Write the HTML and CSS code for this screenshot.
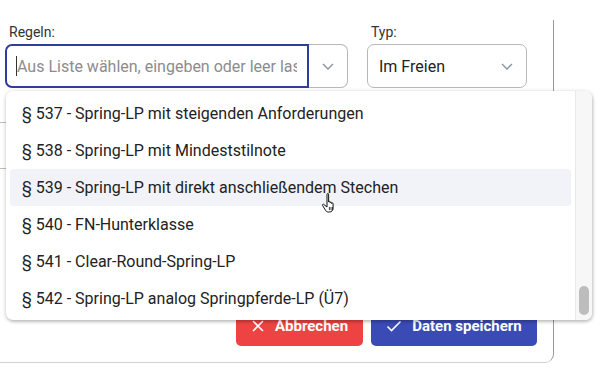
FILE: index.html
```html
<!DOCTYPE html>
<html lang="de">
<head>
    <meta charset="UTF-8">
    <meta name="viewport" content="width=device-width, initial-scale=1.0">
    <title>Regeln</title>
    <link rel="stylesheet" href="styles.css">
</head>
<body>
    <div class="dialog">
        <div class="form-row">
            <div class="field field-rules">
                <label class="label">Regeln:</label>
                <div class="combo">
                    <div class="combo-input"><span class="caret"></span><span class="placeholder">Aus Liste wählen, eingeben oder leer lassen</span></div>
                    <div class="combo-button">
                        <svg width="14" height="14" viewBox="0 0 14 14"><path d="M2 5 L7 10 L12 5" fill="none" stroke="#8a93a6" stroke-width="1.4"/></svg>
                    </div>
                </div>
            </div>
            <div class="field field-type">
                <label class="label">Typ:</label>
                <div class="select">
                    <span>Im Freien</span>
                    <svg width="14" height="14" viewBox="0 0 14 14"><path d="M2 5 L7 10 L12 5" fill="none" stroke="#8a93a6" stroke-width="1.4"/></svg>
                </div>
            </div>
        </div>

        <div class="hidden-field"></div>

        <div class="footer">
            <button class="button button-cancel">
                <svg width="14" height="14" viewBox="0 0 14 14"><path d="M2 2 L12 12 M12 2 L2 12" stroke="#fff" stroke-width="1.6"/></svg>
                Abbrechen
            </button>
            <button class="button button-save">
                <svg width="16" height="14" viewBox="0 0 16 14"><path d="M1.5 7.5 L5.5 11.5 L14.5 2.5" fill="none" stroke="#fff" stroke-width="1.6"/></svg>
                Daten speichern
            </button>
        </div>

        <div class="dropdown">
            <ul class="options">
                <li class="option">§ 537 - Spring-LP mit steigenden Anforderungen</li>
                <li class="option">§ 538 - Spring-LP mit Mindeststilnote</li>
                <li class="option option-hover">§ 539 - Spring-LP mit direkt anschließendem Stechen
                    <svg class="cursor" width="20" height="22" viewBox="0 0 20 22">
                        <path d="M6 2.2c0-1 1.6-1 1.6 0V10c0-.9 1.5-.9 1.5 0v.8c0-.9 1.5-.9 1.5 0v.8c0-.9 1.5-.9 1.5 0v4.2c0 2.6-1.4 4.2-4 4.2H7.4c-1.4 0-2.2-.7-3-1.9L1.6 13.5c-.6-.9.6-1.8 1.3-1L6 15z" fill="#fff" stroke="#111" stroke-width="1" stroke-linejoin="round"/>
                        <path d="M8.4 15v3 M10 15v3 M11.6 15v3" stroke="#111" stroke-width="0.8"/>
                    </svg>
                </li>
                <li class="option">§ 540 - FN-Hunterklasse</li>
                <li class="option">§ 541 - Clear-Round-Spring-LP</li>
                <li class="option">§ 542 - Spring-LP analog Springpferde-LP (Ü7)</li>
            </ul>
            <div class="scrollbar"><div class="thumb"></div></div>
        </div>
    </div>
</body>
</html>
```

FILE: styles.css
```css
body {
    margin: 0;
    width: 600px;
    height: 375px;
    overflow: hidden;
    background-color: #fff;
    font-family: Roboto, 'Noto Sans', sans-serif;
    color: #222;
}
.dialog {
    position: relative;
    margin-top: 20px;
    width: 554px;
    height: 343px;
    box-sizing: border-box;
    border-right: 1px solid #9a9a9a;
    border-bottom: 1px solid #d2d2d2;
    border-bottom-right-radius: 9px;
    display: flex;
    flex-direction: column;
}
.form-row {
    display: flex;
    gap: 19px;
    padding: 4px 0 0 5px;
}
.label {
    display: block;
    font-size: 14px;
    color: #333;
    margin: 0 0 3px 4px;
    line-height: 17px;
}
.combo {
    display: flex;
    width: 343px;
    height: 44px;
}
.combo-input {
    flex: 1;
    display: flex;
    align-items: center;
    border: 2px solid #303d9c;
    border-radius: 7px 0 0 7px;
    padding: 0 10px 0 9px;
    overflow: hidden;
    white-space: nowrap;
}
.caret {
    width: 1px;
    height: 20px;
    background-color: #333;
    flex: none;
}
.placeholder {
    font-size: 16px;
    color: #8c8c8c;
    overflow: hidden;
}
.combo-button {
    width: 38px;
    border: 1px solid #b8b8b8;
    border-left: none;
    border-radius: 0 7px 7px 0;
    display: flex;
    align-items: center;
    justify-content: center;
}
.select {
    width: 160px;
    height: 44px;
    box-sizing: border-box;
    border: 1px solid #b8b8b8;
    border-radius: 7px;
    display: flex;
    align-items: center;
    justify-content: space-between;
    padding: 0 12px 0 11px;
    font-size: 16px;
    color: #222;
}
.hidden-field {
    margin: 34px 0 0 -10px;
    height: 45px;
    border: 1px solid #bdbdbd;
    border-radius: 6px;
}
.footer {
    margin-top: auto;
    display: flex;
    justify-content: flex-end;
    gap: 8px;
    padding: 0 16px 16px 0;
}
.button {
    height: 40px;
    border: none;
    border-radius: 5px;
    font-family: Roboto, sans-serif;
    font-size: 15px;
    font-weight: 700;
    color: #fff;
    display: flex;
    align-items: center;
    justify-content: center;
    gap: 10px;
}
.button-cancel {
    width: 127px;
    background-color: #ee4343;
}
.button-save {
    width: 166px;
    background-color: #3b4bb6;
}
.dropdown {
    position: absolute;
    top: 71px;
    left: 6px;
    width: 586px;
    height: 229px;
    background-color: #fff;
    border-radius: 7px;
    box-shadow: 0 1px 4px rgba(0, 0, 0, 0.22), 1px 2px 3px rgba(0, 0, 0, 0.12);
    display: flex;
    overflow: hidden;
}
.options {
    list-style: none;
    margin: 0;
    padding: 4px 4px 0 4px;
    flex: 1;
}
.option {
    position: relative;
    height: 37px;
    line-height: 37px;
    padding-left: 12px;
    font-size: 16px;
    color: #222;
    border-radius: 4px;
}
.option-hover {
    background-color: #f1f3f8;
}
.cursor {
    position: absolute;
    left: 311px;
    top: 23px;
}
.scrollbar {
    width: 16px;
    background-color: #f7f7f7;
    border-left: 1px solid #e8e8e8;
    position: relative;
}
.thumb {
    position: absolute;
    left: 3px;
    bottom: 5px;
    width: 10px;
    height: 29px;
    border-radius: 5px;
    background-color: #bdbdbd;
}
```
